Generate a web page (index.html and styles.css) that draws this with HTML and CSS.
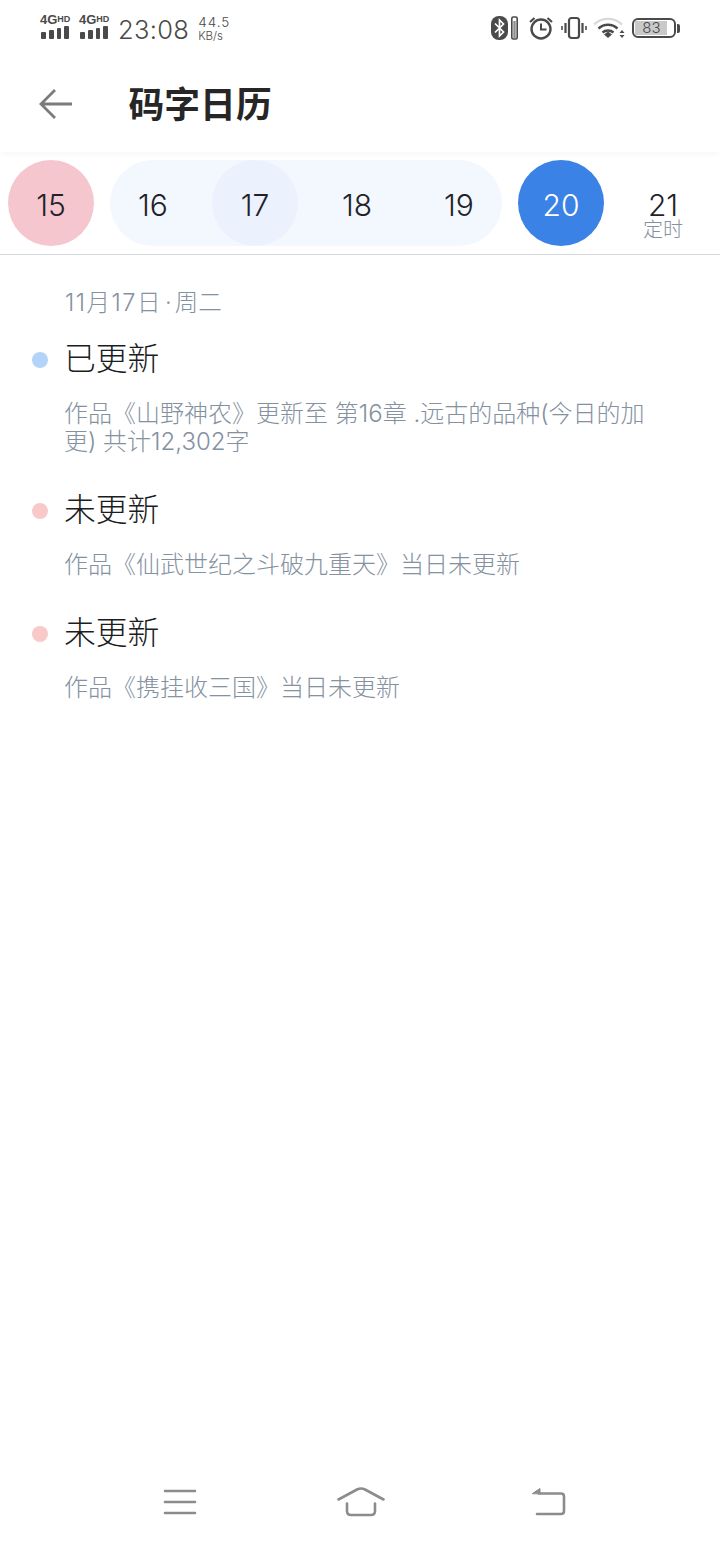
FILE: index.html
```html
<!DOCTYPE html>
<html lang="zh-CN">
<head>
  <meta charset="UTF-8">
  <meta name="viewport" content="width=device-width, initial-scale=1.0">
  <title>码字日历</title>
  <link rel="stylesheet" href="styles.css">
</head>
<body>
<div class="page">
  <div class="statusbar">
    <div class="status-left">
      <div class="net">
        <span class="net-label">4G<small>HD</small></span>
        <span class="bars"><i class="b1"></i><i class="b2"></i><i class="b3"></i><i class="b4"></i></span>
      </div>
      <div class="net">
        <span class="net-label">4G<small>HD</small></span>
        <span class="bars"><i class="b1"></i><i class="b2"></i><i class="b3"></i><i class="b4"></i></span>
      </div>
      <span class="clock">23:08</span>
      <span class="speed"><span class="speed-num">44.5</span><span class="speed-unit">KB/s</span></span>
    </div>
    <div class="status-right">
      <svg class="ico-bt" width="27" height="24" viewBox="0 0 27 24">
        <rect x="0" y="0" width="17" height="24" rx="8" fill="#4a4a4a"/>
        <path d="M4 7.500 12.500 16 8.500 20V4l4 4-8.500 8.500" fill="none" stroke="#fff" stroke-width="1.700"/>
        <rect x="20.800" y="1" width="5.400" height="22" rx="1.500" fill="none" stroke="#4a4a4a" stroke-width="1.600"/>
        <rect x="22.300" y="5" width="2.400" height="17" fill="#8f8f8f"/>
      </svg>
      <svg class="ico-alarm" width="24" height="24" viewBox="0 0 24 24" fill="none" stroke="#4a4a4a">
        <circle cx="12" cy="13" r="9.500" stroke-width="2.400"/>
        <path d="M12 7.500V13.500H17.500" stroke-width="2"/>
        <path d="M1 6 5.500 2M23 6 18.500 2" stroke-width="2.200"/>
      </svg>
      <svg class="ico-vib" width="26" height="24" viewBox="0 0 26 24" fill="none" stroke="#4a4a4a">
        <rect x="8" y="2" width="10" height="20" rx="2.500" stroke-width="2.200"/>
        <path d="M4.500 7V17M21.500 7V17" stroke-width="2.200"/>
        <path d="M1 10V14M25 10V14" stroke-width="1.600"/>
      </svg>
      <svg class="ico-wifi" width="32" height="24" viewBox="0 0 32 24" fill="none">
        <path d="M1 8.500C9 1 21 1 29 8.500" stroke="#d9d9d9" stroke-width="2.200"/>
        <path d="M5.500 12.500C11 7.500 19 7.500 24.500 12.500" stroke="#4a4a4a" stroke-width="2.400"/>
        <path d="M9.500 16.500C12.500 13.800 17.500 13.800 20.500 16.500" stroke="#4a4a4a" stroke-width="2.400"/>
        <path d="M11 18.500 15 15.500 19 18.500 15 22Z" fill="#4a4a4a"/>
        <path d="M26.500 17 29 14 31.500 17ZM26.500 19 29 22 31.500 19Z" fill="#4a4a4a"/>
      </svg>
      <div class="battery">
        <div class="battery-body">
          <span class="battery-fill"></span>
          <span class="battery-num">83</span>
        </div>
        <span class="battery-cap"></span>
      </div>
    </div>
  </div>

  <div class="header">
    <svg class="back" width="34" height="32" viewBox="0 0 34 32" fill="none" stroke="#7b7b7b" stroke-width="2.800">
      <path d="M33 16H2M16 2 2 16 16 30"/>
    </svg>
    <h1>码字日历</h1>
  </div>

  <div class="days">
    <div class="day day-missed">15</div>
    <div class="day-range">
      <div class="day">16</div>
      <div class="day day-current">17</div>
      <div class="day">18</div>
      <div class="day">19</div>
    </div>
    <div class="day day-today">20</div>
    <div class="day day-timed">21<span class="day-note">定时</span></div>
  </div>

  <div class="content">
    <div class="date"><span class="date-day">11月17日</span> · 周二</div>

    <div class="entry">
      <div class="entry-head"><span class="dot dot-done"></span><span class="entry-title">已更新</span></div>
      <p class="entry-text">作品《山野神农》更新至 第16章 .远古的品种(今日的加更) 共计12,302字</p>
    </div>
    <div class="entry">
      <div class="entry-head"><span class="dot dot-miss"></span><span class="entry-title">未更新</span></div>
      <p class="entry-text">作品《仙武世纪之斗破九重天》当日未更新</p>
    </div>
    <div class="entry">
      <div class="entry-head"><span class="dot dot-miss"></span><span class="entry-title">未更新</span></div>
      <p class="entry-text">作品《携挂收三国》当日未更新</p>
    </div>
  </div>

  <div class="navbar">
    <svg class="nav-menu" width="34" height="28" viewBox="0 0 34 28" fill="none" stroke="#8c8c8c" stroke-width="2.600" stroke-linecap="round">
      <path d="M2 3H32M2 14H32M2 25H32"/>
    </svg>
    <svg class="nav-home" width="48" height="32" viewBox="0 0 48 32" fill="none" stroke="#8c8c8c" stroke-width="2.600" stroke-linecap="round" stroke-linejoin="round">
      <path d="M1.500 13.500 20 3.500Q24 1.500 28 3.500L46.500 13.500"/>
      <path d="M10 17.500V25Q10 29 14 29H34Q38 29 38 25V17.500"/>
    </svg>
    <svg class="nav-back" width="36" height="30" viewBox="0 0 36 30" fill="none" stroke="#8c8c8c" stroke-width="2.600" stroke-linecap="round" stroke-linejoin="round">
      <path d="M9 6.500H31Q34 6.500 34 9.500V24Q34 27 31 27H7"/>
      <path d="M2.500 6.500 10 1.500V6.500Z" fill="#8c8c8c" stroke-width="1"/>
    </svg>
  </div>
</div>
</body>
</html>
```

FILE: styles.css
```css
* {
  box-sizing: border-box;
}
body {
  margin: 0;
  background: #fff;
  font-family: Inter, "Noto Sans CJK SC", sans-serif;
}
.page {
  width: 720px;
  height: 1544px;
  display: flex;
  flex-direction: column;
  overflow: hidden;
}

/* status bar */
.statusbar {
  height: 56px;
  flex: none;
  padding: 13px 40px 0 40px;
  display: flex;
  justify-content: space-between;
  color: #4a4a4a;
}
.status-left {
  display: flex;
  align-items: flex-start;
}
.net {
  width: 39px;
  display: flex;
  flex-direction: column;
}
.net-label {
  font-family: "Liberation Sans", sans-serif;
  font-size: 13px;
  font-weight: 700;
  line-height: 12px;
  white-space: nowrap;
}
.net-label small {
  font-size: 9px;
  vertical-align: 2px;
}
.bars {
  display: flex;
  align-items: flex-end;
  gap: 3px;
  height: 13px;
  padding-left: 1px;
}
.bars i {
  width: 4.750px;
  background: #4a4a4a;
  border-radius: 1px;
}
.bars .b1 { height: 7px; }
.bars .b2 { height: 9px; }
.bars .b3 { height: 11px; }
.bars .b4 { height: 13px; }
.clock {
  font-size: 25.500px;
  font-weight: 350;
  line-height: 34px;
  letter-spacing: 0.3px;
}
.speed {
  margin-left: 9px;
  margin-top: 2px;
  display: flex;
  flex-direction: column;
}
.speed-num {
  font-size: 13.500px;
  line-height: 14px;
  letter-spacing: 1px;
  font-weight: 300;
}
.speed-unit {
  font-size: 11.500px;
  line-height: 11px;
  margin-top: 2px;
  font-weight: 300;
}
.status-right {
  display: flex;
  align-items: flex-start;
  padding-top: 3px;
}
.ico-alarm {
  margin-left: 11px;
}
.ico-vib {
  margin-left: 8px;
}
.ico-wifi {
  margin-left: 6px;
}
.battery {
  display: flex;
  align-items: center;
  height: 20px;
  margin-top: 2px;
  margin-left: 7px;
}
.battery-body {
  position: relative;
  width: 44px;
  height: 20px;
  border: 2px solid #4a4a4a;
  border-radius: 6px;
}
.battery-fill {
  display: block;
  position: absolute;
  left: 1px;
  top: 1px;
  bottom: 1px;
  width: 32px;
  background: #c9c9c9;
}
.battery-num {
  position: absolute;
  left: 0;
  right: 5px;
  top: 0;
  text-align: center;
  font-size: 15px;
  line-height: 16px;
  font-weight: 300;
}
.battery-cap {
  width: 3px;
  height: 9px;
  margin-left: 1px;
  background: #4a4a4a;
  border-radius: 0 2px 2px 0;
}

/* header */
.header {
  height: 96px;
  flex: none;
  padding: 0 0 4px 39px;
  display: flex;
  align-items: center;
  box-shadow: 0 3px 6px -1px rgba(0, 0, 0, 0.04);
  position: relative;
}
.back {
  margin-top: 4px;
}
.header h1 {
  margin: 0 0 0 55.500px;
  font-size: 35.800px;
  font-weight: 700;
  color: #262626;
  font-family: "Noto Sans CJK SC", sans-serif;
}

/* date strip */
.days {
  height: 103px;
  flex: none;
  padding: 8px 0 0 8px;
  display: flex;
  align-items: flex-start;
  gap: 16px;
  border-bottom: 1px solid #d5d8dc;
}
.day-range {
  display: flex;
  gap: 16px;
  background: #f3f8fe;
  border-radius: 43px;
}
.day {
  width: 86px;
  height: 86px;
  padding-top: 4px;
  border-radius: 50%;
  display: flex;
  flex-direction: column;
  align-items: center;
  justify-content: center;
  font-size: 30px;
  font-weight: 300;
  color: #1f2329;
}
.day-missed {
  background: #f6c6cf;
}
.day-current {
  background: #ebf2fd;
}
.day-today {
  background: #3b82e6;
  color: #fff;
}
.day-timed {
  justify-content: flex-start;
  padding-top: 31px;
  line-height: 28px;
}
.day-note {
  font-size: 20px;
  line-height: 20px;
  color: #84919f;
  font-weight: 300;
  font-family: "Noto Sans CJK SC", sans-serif;
}

/* list */
.content {
  flex: 1;
  padding: 33px 64px 0 32px;
}
.date {
  margin-left: 33px;
  font-size: 23.500px;
  line-height: 30px;
  font-weight: 300;
  word-spacing: -3.500px;
  color: #84919f;
}
.date-day {
  letter-spacing: 1.500px;
}
.entry {
  margin-top: 19px;
}
.entry + .entry {
  margin-top: 32px;
}
.entry-head {
  display: flex;
  align-items: center;
  height: 38px;
}
.dot {
  width: 16px;
  height: 16px;
  border-radius: 50%;
  margin: 8px 16px 0 0;
}
.dot-done {
  background: #b3d3f8;
}
.dot-miss {
  background: #f9c9c9;
}
.entry-title {
  font-size: 31.800px;
  font-weight: 300;
  color: #1a1d21;
}
.entry-text {
  margin: 25px 0 0 32px;
  font-size: 24px;
  line-height: 28px;
  font-weight: 300;
  color: #84919f;
}

/* nav bar */
.navbar {
  height: 84px;
  flex: none;
  display: flex;
  align-items: center;
  padding-left: 163px;
  gap: 140px;
}
.nav-back {
  margin-left: 5px;
}
```
